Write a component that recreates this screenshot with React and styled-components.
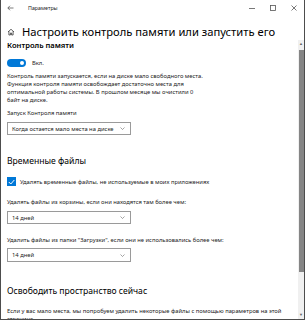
import React from "react";
import styled, { createGlobalStyle } from "styled-components";

const Global = createGlobalStyle`
  html, body { margin: 0; padding: 0; background: #fff; }
  body { font-family: "Noto Sans", "Open Sans", sans-serif; color: #111; }
`;

const Window = styled.div`
  box-sizing: border-box;
  width: 305px;
  height: 320px;
  border: 1px solid #4d4d4d;
  border-top: none;
  display: flex;
  flex-direction: column;
  overflow: hidden;
  background: #fff;
`;

const TitleBar = styled.div`
  height: 15px;
  display: flex;
  align-items: center;
  flex-shrink: 0;
`;

const BackIcon = styled.svg`
  width: 7px;
  height: 6px;
  margin-left: 6px;
`;

const TitleText = styled.span`
  font-size: 5.3px;
  margin-left: 14px;
  color: #222;
  flex: 1;
`;

const WinControls = styled.div`
  display: flex;
  align-items: center;
`;

const WinBtn = styled.div`
  width: 21px;
  height: 15px;
  display: flex;
  align-items: center;
  justify-content: center;
`;

const Header = styled.div`
  display: flex;
  align-items: center;
  padding: 10px 0 0 6px;
  height: 14px;
  flex-shrink: 0;
`;

const HomeIcon = styled.svg`
  width: 8px;
  height: 8px;
  margin-right: 7px;
`;

const PageTitle = styled.h1`
  margin: 0;
  font-weight: 400;
  font-size: 11.2px;
  line-height: 14px;
  color: #000;
  white-space: nowrap;
`;

const ScrollArea = styled.div`
  flex: 1;
  display: flex;
  min-height: 0;
  margin-top: 1px;
`;

const Content = styled.div`
  flex: 1;
  padding-left: 6px;
  overflow: hidden;
`;

const SectionLabel = styled.div`
  font-size: 7.6px;
  font-weight: 600;
  line-height: 10px;
  color: #000;
`;

const ToggleRow = styled.div`
  display: flex;
  align-items: center;
  height: 9px;
  margin-top: 8px;
  gap: 6px;
`;

const Toggle = styled.div`
  box-sizing: border-box;
  width: 19px;
  height: 8px;
  border-radius: 4px;
  background: #0078d7;
  position: relative;
  &::after {
    content: "";
    position: absolute;
    right: 2px;
    top: 2px;
    width: 4px;
    height: 4px;
    border-radius: 50%;
    background: #fff;
  }
`;

const Small = styled.span`
  font-size: 5.8px;
  color: #222;
  white-space: nowrap;
`;

const Para = styled.p`
  margin: ${(p) => p.$mt || 0}px 0 0;
  font-size: 5.8px;
  line-height: 8px;
  color: #222;
  max-width: ${(p) => p.$max || 210}px;
`;

const Label = styled.div`
  margin-top: ${(p) => p.$mt || 0}px;
  font-size: 5.8px;
  line-height: 8px;
  color: #222;
  white-space: nowrap;
`;

const Select = styled.div`
  box-sizing: border-box;
  margin-top: ${(p) => p.$mt || 0}px;
  width: 124px;
  height: ${(p) => p.$h || 13}px;
  border: 1px solid #9a9a9a;
  display: flex;
  align-items: center;
  justify-content: space-between;
  padding: 0 5px 0 4px;
  font-size: 5.8px;
  color: #222;
`;

const Chevron = styled.svg`
  width: 5px;
  height: 3px;
`;

const SubHeading = styled.h2`
  margin: ${(p) => p.$mt || 0}px 0 0;
  font-size: 8.6px;
  font-weight: 400;
  line-height: 12px;
  color: #000;
  white-space: nowrap;
`;

const CheckRow = styled.div`
  display: flex;
  align-items: center;
  margin-top: ${(p) => p.$mt || 0}px;
  height: 9px;
  gap: 4px;
`;

const CheckBox = styled.div`
  width: 9px;
  height: 9px;
  background: #0078d7;
  display: flex;
  align-items: center;
  justify-content: center;
`;

const Scrollbar = styled.div`
  width: 6px;
  background: #f0f0f0;
  display: flex;
  flex-direction: column;
  align-items: center;
  flex-shrink: 0;
`;

const Arrow = styled.div`
  font-size: 4px;
  line-height: 8px;
  height: 8px;
  color: #606060;
`;

const Thumb = styled.div`
  width: 5px;
  height: 222px;
  background: #858585;
  margin-top: 2px;
`;

const Spacer = styled.div`
  flex: 1;
`;

const ChevronIcon = () => (
  <Chevron viewBox="0 0 10 6">
    <path d="M1 1l4 4 4-4" fill="none" stroke="#666" strokeWidth="1.2" />
  </Chevron>
);

export default function App() {
  return (
    <>
      <Global />
      <Window>
        <TitleBar>
          <BackIcon viewBox="0 0 14 12">
            <path d="M13 6H2M6 1.5L1.5 6 6 10.5" fill="none" stroke="#333" strokeWidth="1.3" />
          </BackIcon>
          <TitleText>Параметры</TitleText>
          <WinControls>
            <WinBtn>
              <svg width="6" height="6" viewBox="0 0 6 6">
                <path d="M0 3.5h6" stroke="#555" strokeWidth="0.8" />
              </svg>
            </WinBtn>
            <WinBtn>
              <svg width="6" height="6" viewBox="0 0 6 6">
                <rect x="0.5" y="0.5" width="5" height="5" fill="none" stroke="#555" strokeWidth="0.8" />
              </svg>
            </WinBtn>
            <WinBtn>
              <svg width="6" height="6" viewBox="0 0 6 6">
                <path d="M0.5 0.5l5 5M5.5 0.5l-5 5" stroke="#555" strokeWidth="0.8" />
              </svg>
            </WinBtn>
          </WinControls>
        </TitleBar>
        <Header>
          <HomeIcon viewBox="0 0 16 16">
            <path d="M2 8L8 2.5 14 8M3.8 6.5V14h3V10h2.4v4h3V6.5" fill="none" stroke="#222" strokeWidth="1.4" strokeLinejoin="round" />
          </HomeIcon>
          <PageTitle>Настроить контроль памяти или запустить его</PageTitle>
        </Header>
        <ScrollArea>
          <Content>
            <SectionLabel>Контроль памяти</SectionLabel>
            <ToggleRow>
              <Toggle />
              <Small>Вкл.</Small>
            </ToggleRow>
            <Para $mt={5} $max={205}>
              Контроль памяти запускается, если на диске мало свободного места. Функция контроля памяти освобождает достаточно места для оптимальной работы системы. В прошлом месяце мы очистили 0<br />байт на диске.
            </Para>
            <Label $mt={5}>Запуск Контроля памяти</Label>
            <Select $mt={5}>
              <span>Когда остается мало места на диске</span>
              <ChevronIcon />
            </Select>
            <SubHeading $mt={20}>Временные файлы</SubHeading>
            <CheckRow $mt={10}>
              <CheckBox>
                <svg width="7" height="6" viewBox="0 0 7 6">
                  <path d="M0.8 3l2 2 3.5-4" fill="none" stroke="#fff" strokeWidth="1" />
                </svg>
              </CheckBox>
              <Small>Удалять временные файлы, не используемые в моих приложениях</Small>
            </CheckRow>
            <Label $mt={12}>Удалять файлы из корзины, если они находятся там более чем:</Label>
            <Select $mt={5}>
              <span>14 дней</span>
              <ChevronIcon />
            </Select>
            <Label $mt={12}>Удалить файлы из папки "Загрузки", если они не использовались более чем:</Label>
            <Select $mt={4} $h={14}>
              <span>14 дней</span>
              <ChevronIcon />
            </Select>
            <SubHeading $mt={23}>Освободить пространство сейчас</SubHeading>
            <Para $mt={10} $max={290}>
              Если у вас мало места, мы попробуем удалить некоторые файлы с помощью параметров на этой странице.
            </Para>
          </Content>
          <Scrollbar>
            <Arrow>▲</Arrow>
            <Thumb />
            <Spacer />
            <Arrow>▼</Arrow>
          </Scrollbar>
        </ScrollArea>
      </Window>
    </>
  );
}
